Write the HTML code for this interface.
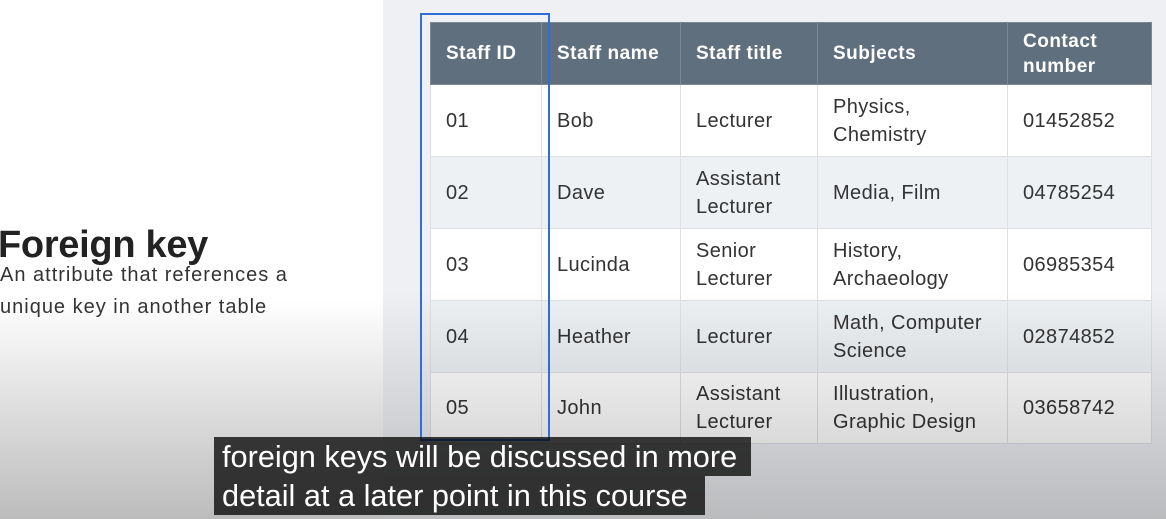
<!DOCTYPE html>
<html><head><style>
*{margin:0;padding:0;box-sizing:border-box}
body{width:1166px;height:519px;overflow:hidden;position:relative;font-family:"Liberation Sans",sans-serif;background:#fff}
.left{position:absolute;left:0;top:0;width:383px;height:519px;background:linear-gradient(#fff 0,#fff 300px,#bcbcbc 519px)}
.right{position:absolute;left:383px;top:0;width:783px;height:519px;background:#eef0f3}
table{position:absolute;left:430px;top:22px;border-collapse:collapse;font-size:20px;color:#333;letter-spacing:.4px;table-layout:fixed;width:721px}
td,th{border:1px solid #dde1e6;padding:0 15px;text-align:left;line-height:28px;vertical-align:middle;white-space:nowrap}
th{background:#5f6f7e;color:#fff;height:62px;font-size:19px;line-height:25px;border-color:#7b8896;letter-spacing:.5px}
tr{height:72px}
tr:nth-child(even) td{background:#fff}
tr:nth-child(odd) td{background:#eef1f4}
.shade{position:absolute;left:383px;top:290px;width:783px;height:229px;background:linear-gradient(rgba(0,0,0,0),rgba(0,0,0,.22))}
.box{position:absolute;left:420px;top:13px;width:130px;height:428px;border:2px solid #2d6fd6}
h1{position:absolute;left:-2px;top:224px;font-size:38px;font-weight:bold;color:#222;letter-spacing:-.3px}
.sub{position:absolute;left:0;top:259px;font-size:20px;line-height:32px;color:#333;letter-spacing:1px}
.cap{position:absolute;left:214px;background:rgba(8,8,8,.78);color:#fff;font-size:31px;height:39px;line-height:39px;padding-left:8px;white-space:nowrap}
.cap span{display:inline-block;transform:scaleX(.99);transform-origin:left}
</style></head><body>
<div class="left"></div>
<div class="right"></div>
<h1>Foreign key</h1>
<div class="sub">An attribute that references a<br>unique key in another table</div>
<table>
<colgroup><col style="width:111px"><col style="width:139px"><col style="width:137px"><col style="width:190px"><col style="width:144px"></colgroup>
<tr style="height:62px"><th>Staff ID</th><th>Staff name</th><th>Staff title</th><th>Subjects</th><th>Contact<br>number</th></tr>
<tr><td>01</td><td>Bob</td><td>Lecturer</td><td>Physics,<br>Chemistry</td><td>01452852</td></tr>
<tr><td>02</td><td>Dave</td><td>Assistant<br>Lecturer</td><td>Media, Film</td><td>04785254</td></tr>
<tr><td>03</td><td>Lucinda</td><td>Senior<br>Lecturer</td><td>History,<br>Archaeology</td><td>06985354</td></tr>
<tr><td>04</td><td>Heather</td><td>Lecturer</td><td>Math, Computer<br>Science</td><td>02874852</td></tr>
<tr style="height:71px"><td>05</td><td>John</td><td>Assistant<br>Lecturer</td><td>Illustration,<br>Graphic Design</td><td>03658742</td></tr>
</table>
<div class="shade"></div>
<div class="box"></div>
<div class="cap" style="top:437px;width:537px"><span>foreign keys will be discussed in more</span></div>
<div class="cap" style="top:476px;width:491px"><span>detail at a later point in this course</span></div>
</body></html>
